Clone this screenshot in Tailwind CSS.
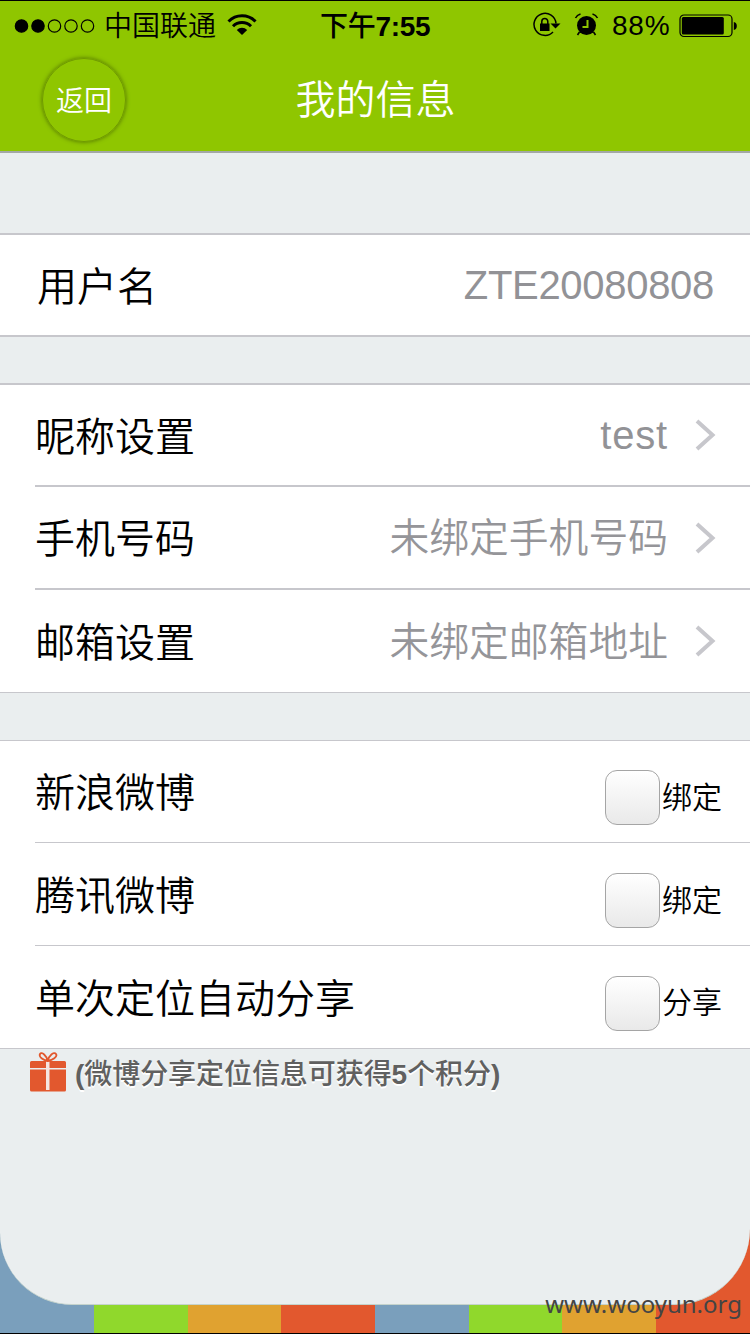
<!DOCTYPE html>
<html lang="zh-CN">
<head>
  <meta charset="UTF-8" />
  <meta name="viewport" content="width=device-width, initial-scale=1.0" />
  <title>我的信息</title>
  <script src="https://cdn.jsdelivr.net/npm/@tailwindcss/browser@4"></script>
</head>
<body class="relative flex flex-col w-[750px] h-[1334px] overflow-hidden bg-[#eaeeef] text-black font-['Liberation_Sans','Noto_Sans_CJK_SC_DemiLight','Noto_Sans_CJK_SC',sans-serif] font-[350]">

  <header class="h-[153px] shrink-0 bg-[#8fc600] border-t border-t-black border-b-2 border-b-[#a3a8a5]">
    <!-- Status bar -->
    <div class="grid grid-cols-[320px_112px_1fr] h-[50px] items-center">
      <div class="flex items-center pl-[14px]">
        <svg width="82" height="16" viewBox="0 0 82 16" stroke="black" stroke-width="1.2">
          <circle cx="7.5" cy="8" r="6.2" /><circle cx="24" cy="8" r="6.2" />
          <g fill="none"><circle cx="40.5" cy="8" r="6.2" /><circle cx="57" cy="8" r="6.2" /><circle cx="73.5" cy="8" r="6.2" /></g>
        </svg>
        <span class="ml-2 pt-0.5 text-[28px] leading-none">中国联通</span>
        <svg class="ml-[11px] -mt-0.5" width="30" height="22" viewBox="0 0 30 22" fill="none" stroke="black" stroke-width="3">
          <path d="M1.500 7.500a19 19 0 0 1 27 0" /><path d="M6 12.300a12.700 12.700 0 0 1 18 0" />
          <path d="M15 21l-5.200-5a7.400 7.400 0 0 1 10.400 0z" fill="black" stroke="none" />
        </svg>
      </div>
      <div class="pt-0.5 text-[28px] leading-none font-medium font-['Liberation_Sans','Noto_Sans_CJK_SC',sans-serif] tracking-[-0.3px] whitespace-nowrap">下午<span class="font-bold">7:55</span></div>
      <div class="flex items-center pl-[100px]">
        <svg class="-mt-0.5" width="30" height="26" viewBox="0 0 30 26" fill="none" stroke="black" stroke-width="1.500">
          <path d="M24 11.500a11 11 0 1 0-3 8.500" />
          <path d="M18.500 11.500h10l-5 5z" fill="black" stroke="none" />
          <rect x="8" y="11.500" width="9.500" height="7.500" fill="black" stroke="none" />
          <path d="M9.800 12V9.500a3 3 0 0 1 6 0V12" />
        </svg>
        <svg class="ml-3 -mt-0.5" width="26" height="26" viewBox="0 0 26 26" fill="none" stroke="black" stroke-width="1.600">
          <circle cx="12.500" cy="13.500" r="9.500" fill="black" stroke="none" />
          <path d="M1.500 6Q3 3 6.500 2M23.500 6Q22 3 18.500 2" />
          <path d="M5.500 20l-2 3M19.500 20l2 3" />
          <path d="M13.500 8v7H8.500" stroke="#8fc600" stroke-width="2" />
        </svg>
        <span class="ml-3 w-[59px] text-[28px] leading-none tracking-[0.8px]">88%</span>
        <svg class="ml-2" width="60" height="24" viewBox="0 0 60 24">
          <rect x="1" y="1" width="52" height="21.500" rx="4" fill="none" stroke="black" stroke-width="1.200" />
          <rect x="2.800" y="3" width="42" height="17.500" rx="1.500" />
          <path d="M54.800 8q3 .5 3 4t-3 4z" />
        </svg>
      </div>
    </div>
    <!-- Title bar -->
    <div class="grid grid-cols-[250px_250px_250px] h-[98px] items-center text-white">
      <button class="ml-[42px] pt-1 w-[84px] h-[84px] rounded-full border border-[#6f9a00] shadow-[0_0_4px_#4f7000] text-[28px] leading-none">返回</button>
      <h1 class="pl-px text-center text-[40px] leading-none">我的信息</h1>
    </div>
  </header>

  <section class="mt-20 h-[104px] shrink-0 flex items-center justify-between px-9 bg-white border-y-2 border-[#c7c7cc] text-[40px] leading-none">
    <span class="pt-[3px] pl-px">用户名</span>
    <span class="text-[#929296] tracking-[-0.3px]">ZTE20080808</span>
  </section>

  <section class="mt-[46px] shrink-0 bg-white border-t-2 border-b border-[#c7c7cc] text-[40px] leading-none pl-[35px]">
    <div class="h-[102px] flex items-center border-b-2 border-[#c7c7cc] pr-[34px]">
      <span class="pt-[3px]">昵称设置</span>
      <span class="ml-auto -mr-px text-[#929296] tracking-[0.8px]">test</span>
      <svg class="ml-7" width="21" height="32" viewBox="0 0 21 32" fill="none" stroke="#c7c7cc" stroke-width="4"><path d="M2 2l15.500 14L2 30" /></svg>
    </div>
    <div class="h-[103px] flex items-center border-b-2 border-[#c7c7cc] pr-[34px]">
      <span class="pt-[3px]">手机号码</span>
      <span class="ml-auto -mr-px pt-[3px] text-[#959599] text-[39.8px]">未绑定手机号码</span>
      <svg class="ml-7" width="21" height="32" viewBox="0 0 21 32" fill="none" stroke="#c7c7cc" stroke-width="4"><path d="M2 2l15.500 14L2 30" /></svg>
    </div>
    <div class="h-[102px] flex items-center pr-[34px]">
      <span class="pt-[3px]">邮箱设置</span>
      <span class="ml-auto -mr-px pt-[3px] text-[#959599] text-[39.8px]">未绑定邮箱地址</span>
      <svg class="ml-7" width="21" height="32" viewBox="0 0 21 32" fill="none" stroke="#c7c7cc" stroke-width="4"><path d="M2 2l15.500 14L2 30" /></svg>
    </div>
  </section>

  <section class="mt-[47px] shrink-0 bg-white border-y border-[#c7c7cc] text-[40px] leading-none pl-[35px]">
    <div class="h-[102px] flex items-center justify-between border-b border-[#c7c7cc] pr-7">
      <span class="pt-[3px]">新浪微博</span>
      <label class="mt-3 flex items-center gap-0.5 text-[30px]">
        <input type="checkbox" class="appearance-none w-[55px] h-[55px] rounded-xl border border-[#a5a5a5] bg-linear-to-b from-white to-[#e9e9e9]" />绑定
      </label>
    </div>
    <div class="h-[103px] flex items-center justify-between border-b border-[#c7c7cc] pr-7">
      <span class="pt-1">腾讯微博</span>
      <label class="mt-3 flex items-center gap-0.5 text-[30px]">
        <input type="checkbox" class="appearance-none w-[55px] h-[55px] rounded-xl border border-[#a5a5a5] bg-linear-to-b from-white to-[#e9e9e9]" /><span class="pt-0.5">绑定</span>
      </label>
    </div>
    <div class="h-[102px] flex items-center justify-between pr-7">
      <span class="pt-1">单次定位自动分享</span>
      <label class="mt-3 flex items-center gap-0.5 text-[30px]">
        <input type="checkbox" class="appearance-none w-[55px] h-[55px] rounded-xl border border-[#a5a5a5] bg-linear-to-b from-white to-[#e9e9e9]" />分享
      </label>
    </div>
  </section>

  <!-- Share hint -->
  <div class="flex items-start h-12 mt-[3px] pl-[30px]">
    <svg width="36" height="40" viewBox="0 0 36 40" fill="#e2582e">
      <path d="M1.500 9H34.500Q36 9 36 10.500V16H0V10.500Q0 9 1.500 9zM0 17.500H36V38Q36 39.500 34.500 39.500H1.500Q0 39.500 0 38z" />
      <path d="M16 9.500h3.500v28.500H16z" fill="#f5e6e1" />
      <path d="M17.700 9C13 8 8.500 5 10 2s7 2 7.700 7C18.500 4 24 -1 26 2S22.500 8 17.700 9z" fill="none" stroke="#e2582e" stroke-width="1.800" />
    </svg>
    <span class="ml-[9px] pt-[3px] text-[28px] leading-10 tracking-[-0.06px] font-medium font-['Liberation_Sans','Noto_Sans_CJK_SC',sans-serif] text-[#606060] whitespace-nowrap [text-shadow:0_2px_0_white]"><b>(</b>微博分享定位信息可获得<b>5</b>个积分<b>)</b></span>
  </div>

  <!-- Rounded page bottom over the color strip -->
  <footer class="mt-auto h-[110px] shrink-0 border-b border-black bg-[linear-gradient(to_right,#7a9fbc_0_94px,#90d82c_94px_188px,#e0a230_188px_281px,#e2582e_281px_375px,#7a9fbc_375px_469px,#90d82c_469px_562px,#e0a230_562px_656px,#e2582e_656px)]">
    <div class="h-[81px] rounded-bl-[72px] rounded-br-[76px] bg-[#eaeeef] border-b border-[#c5d3cc]"></div>
  </footer>
  <div class="absolute right-[8px] bottom-[12px] text-[24px] leading-9 font-normal text-[#444] font-['Noto_Sans',sans-serif]">www.wooyun.org</div>

</body>
</html>
